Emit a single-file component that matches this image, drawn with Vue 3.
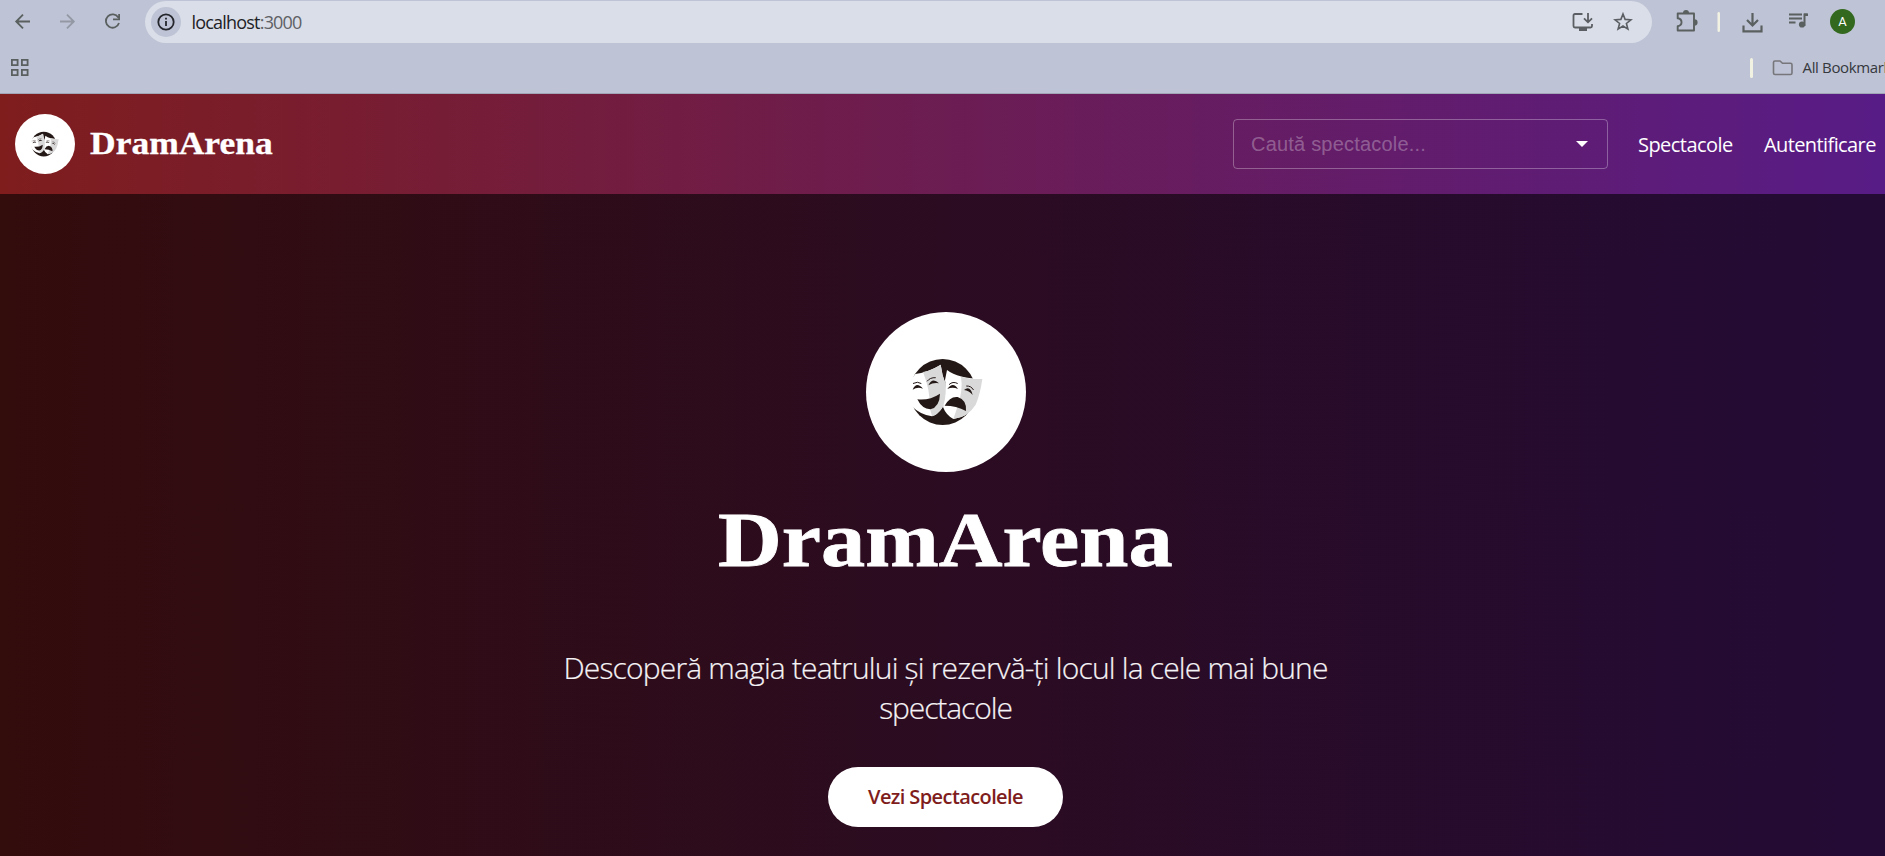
<script setup>
const navLinks = [
  { label: 'Spectacole', cls: 'shows' },
  { label: 'Autentificare', cls: 'login' },
]
</script>

<template>
  <div class="window">
    <svg class="defs" aria-hidden="true">
      <symbol id="masks" viewBox="48 36 480 480">
        <circle cx="278" cy="276" r="99" fill="#231815" />
        <path d="M196 222Q236 216 272 194Q276 225 286 250Q294 300 276 325Q262 345 246 349Q210 343 187 320L174 290Q172 245 196 222Z" fill="#fff" />
        <path d="M219 216Q249 210 272 194Q276 225 286 250Q294 300 276 325Q262 345 246 349L240 326Q241 270 219 216Z" fill="#d9d9da" />
        <path d="M291 210Q324 235 397 237Q390 285 377 314Q354 351 310 357Q288 345 279 321Q292 280 285 240Z" fill="#fff" />
        <path d="M333 230Q360 238 397 237Q390 285 377 314Q354 351 310 357L322 322Q340 270 333 230Z" fill="#d9d9da" />
        <g fill="#231815">
          <path d="M202 298Q238 302 270 281Q269 321 241 328Q216 327 202 298Z" />
          <path d="M284 317Q300 288 323 291Q351 300 348 333Q319 317 284 317Z" />
          <path d="M188 269Q199 243 219 266Q202 260 188 269Z" />
          <path d="M235 256Q247 230 267 250Q250 247 235 256Z" />
          <path d="M292 267Q309 243 324 267Q308 260 292 267Z" />
          <path d="M342 270Q361 255 368 285Q357 271 342 270Z" />
        </g>
        <g fill="none" stroke="#231815" stroke-width="3" stroke-linecap="round">
          <path d="M190 250Q203 243 213 250M232 243Q240 232 256 233M298 253Q308 243 322 250M350 258Q363 257 370 269" />
        </g>
      </symbol>
    </svg>

    <div class="chrome">
      <div class="toolbar">
        <svg class="nav-icons" width="145" height="43" viewBox="0 0 145 43" fill="none" stroke="#5a605f" stroke-width="1.8">
          <path d="M30 21.500H16.500M23 14.700L16.200 21.500L23 28.300" />
          <path stroke="#9398a4" d="M60 21.500H73.500M67 14.700L73.800 21.500L67 28.300" />
          <path d="M118.300 17.500A6.700 6.700 0 1 0 119 23M119.100 14V19.300H113" />
        </svg>
        <div class="omnibox">
          <span class="info">
            <svg width="18" height="18" viewBox="0 0 18 18"><circle cx="9" cy="9" r="7.700" fill="none" stroke="#24262c" stroke-width="1.800" /><path d="M8.100 8h1.800v5H8.100zM8.100 4.700h1.800v1.900H8.100z" fill="#24262c" /></svg>
          </span>
          <span class="url">localhost<span>:3000</span></span>
          <svg class="box-icons" width="64" height="24" viewBox="0 0 64 24" fill="none" stroke="#5b5e62" stroke-width="1.800">
            <path d="M11.500 4H4Q2.500 4 2.500 5.500V16Q2.500 17.500 4 17.500H19.500Q21 17.500 21 16V14M17 3V12M13 8.300L17 12.300L21 8.300" />
            <path d="M8 19.500H16" stroke-width="3" />
            <path d="M52 4L54.100 9.400L59.900 9.800L55.400 13.500L56.900 19.100L52 16L47.100 19.100L48.600 13.500L44.100 9.800L49.900 9.400Z" stroke-width="1.600" />
          </svg>
        </div>
        <svg class="actions" width="170" height="43" viewBox="0 0 170 43">
          <g fill="none" stroke="#5a605f" stroke-width="1.900">
            <path d="M25.700 13.500H42V30.500H25.700V26.200C30.800 25.500 30.800 19 25.700 18.200Z" stroke-linejoin="round" />
            <path d="M100.500 13V25M95 20L100.500 25.500L106 20M91.500 25.500V31.300H109.500V25.500" stroke-width="2.200" />
            <path d="M137 14.500H150M137 18.500H150M137 22.500H143.500" />
            <path d="M152.500 26V14.500H155.500" stroke-width="2" />
          </g>
          <path d="M31 13A3 3 0 0 1 37 13ZM42.500 19.300A3 3 0 0 1 42.500 25.500Z" fill="#5a605f" />
          <circle cx="150" cy="24.500" r="3.100" fill="#5a605f" /><path d="M152 13.500h4v2.500H152z" fill="#5a605f" />
          <rect x="65.500" y="12" width="2.500" height="20" rx="1.200" fill="#f1f2e1" />
        </svg>
        <span class="avatar">A</span>
      </div>
      <div class="bookmarks">
        <svg width="20" height="20" viewBox="0 0 20 20" fill="none" stroke="#5a605f" stroke-width="1.800"><path d="M1.900 1.900h5.700v5.300H1.900zM11.900 1.900h5.700v5.300h-5.700zM1.900 11.900h5.700v5.300H1.900zM11.900 11.900h5.700v5.300h-5.700z" /></svg>
        <div class="all">
          <i></i>
          <svg width="22" height="18" viewBox="0 0 22 18" fill="none" stroke="#77777b" stroke-width="1.600"><path d="M3 2H8L10.500 4.300H18.500Q20 4.300 20 5.800V14Q20 15.500 18.500 15.500H3Q1.500 15.500 1.500 14V3.500Q1.500 2 3 2Z" /></svg>
          <span>All Bookmarks</span>
        </div>
      </div>
    </div>

    <div class="page">
      <header>
        <div class="brand">
          <span class="logo small"><svg><use href="#masks" /></svg></span>
          <span class="brand-name">DramArena</span>
        </div>
        <div class="right">
          <div class="search">
            <span>Caută spectacole...</span>
            <svg width="12" height="6" viewBox="0 0 12 6"><path d="M0 0H12L6 6Z" fill="#fff" /></svg>
          </div>
          <a v-for="link in navLinks" :key="link.label" :class="link.cls">{{ link.label }}</a>
        </div>
      </header>
      <main>
        <span class="logo"><svg><use href="#masks" /></svg></span>
        <h1>DramArena</h1>
        <p>Descoperă magia teatrului și rezervă-ți locul la cele mai bune<br><span class="last-line">spectacole</span></p>
        <button>Vezi Spectacolele</button>
      </main>
    </div>
  </div>
</template>

<style>
body { margin: 0; overflow: hidden; }
</style>

<style scoped>
* { box-sizing: border-box; }
.window { position: relative; width: 1885px; height: 856px; overflow: hidden; font-family: "Open Sans", "Noto Sans", sans-serif; }
.defs { position: absolute; width: 0; height: 0; }
svg { display: block; flex: none; }
.chrome { height: 94px; background: #bec3d5; border-bottom: 1px solid #a2a5b6; }
.toolbar { display: flex; height: 43px; }
.omnibox { display: flex; align-items: center; width: 1507px; height: 42px; margin-top: 1px; border-radius: 21px; background: #dadee8; padding: 0 25px 0 6px; }
.info { display: flex; align-items: center; justify-content: center; width: 30px; height: 30px; border-radius: 50%; background: #bec3d5; }
.url { margin-left: 10.500px; font-size: 18px; line-height: 24px; color: #202226; letter-spacing: -0.8px; white-space: nowrap; }
.url span { color: #5e6166; }
.box-icons { margin-left: auto; margin-right: -7.500px; }
.avatar { width: 25px; height: 25px; margin: 9px 0 0 8px; border-radius: 50%; background: #33691e; color: #fff; font: 13px/25px Roboto, sans-serif; text-align: center; }
.bookmarks { display: flex; height: 50px; align-items: center; padding-left: 10px; }
.all { display: flex; align-items: center; margin-left: 1720px; white-space: nowrap; }
.all i { width: 3px; height: 20px; border-radius: 1.5px; background: #f1f2e1; }
.all svg { margin-left: 18.500px; }
.all span { margin: -2px 0 0 9px; font-size: 15px; letter-spacing: -0.35px; color: #35383d; }
.page { width: 1891px; }
header { display: flex; align-items: center; justify-content: space-between; height: 100px; padding: 0 15px; background: linear-gradient(to right, #7f1d1d, #581c87); }
.brand, .right { display: flex; align-items: center; }
.logo { display: block; width: 160px; height: 160px; border-radius: 50%; background: #fff; }
.logo svg { width: 100%; height: 100%; }
.small { width: 60px; height: 60px; }
.brand-name, h1 { font-family: "Liberation Serif", serif; font-weight: 700; color: #fff; }
.brand-name { margin-left: 15px; font-size: 31.700px; line-height: 40px; transform: scaleX(1.12); transform-origin: left; -webkit-text-stroke: .3px #fff; }
.search { display: flex; align-items: center; justify-content: space-between; width: 375px; height: 50px; padding: 0 19px 0 17px; border: 1px solid rgba(255,255,255,.3); border-radius: 4px; font: 20px/24px "Liberation Sans", Arial, sans-serif; letter-spacing: .2px; color: rgba(255,255,255,.3); }
a { padding-top: 2px; color: #fff; font-size: 20px; line-height: 28px; white-space: nowrap; }
.shows { width: 95px; margin-left: 30px; letter-spacing: -0.55px; }
.login { width: 112px; margin-left: 31px; letter-spacing: -0.6px; }
main { display: flex; flex-direction: column; align-items: center; height: 662px; padding-top: 118px; background: linear-gradient(to right, #330c0c, #230b36); }
h1 { margin: 23px 0 0; font-size: 79px; line-height: 90px; transform: scaleX(1.118); -webkit-text-stroke: .8px #fff; }
p { margin: 63px 0 0; text-align: center; color: #f5f3f5; font-size: 30px; line-height: 40px; font-weight: 300; letter-spacing: -0.82px; white-space: nowrap; -webkit-text-stroke: .2px #f5f3f5; }
.last-line { letter-spacing: -1.100px; }
button { width: 235px; height: 60px; margin-top: 39px; padding: 0; border: 0; border-radius: 30px; background: #fff; color: #7f1d1d; font: 600 20px/28px "Open Sans", sans-serif; letter-spacing: -0.6px; }
</style>
